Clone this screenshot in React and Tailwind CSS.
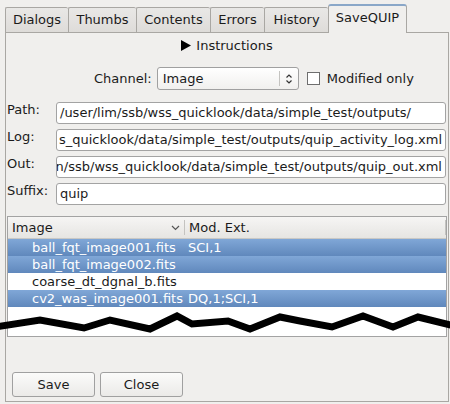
import React from "react";

const tabs = [
  { name: "Dialogs", w: "w-[63px]" },
  { name: "Thumbs", w: "w-[68px]" },
  { name: "Contents", w: "w-[74px]" },
  { name: "Errors", w: "w-[54px]" },
  { name: "History", w: "w-[64px]" },
];

const rows = [
  { file: "ball_fqt_image001.fits", ext: "SCI,1", sel: true },
  { file: "ball_fqt_image002.fits", ext: "", sel: true },
  { file: "coarse_dt_dgnal_b.fits", ext: "", sel: false },
  { file: "cv2_was_image001.fits", ext: "DQ,1;SCI,1", sel: true },
];

function Field({ label, value, right }) {
  return (
    <div className="flex items-start">
      <div className="w-[50px] pl-[1px] leading-[17px] -mt-[1px] text-[#1b1b1b]">{label}</div>
      <div
        className={
          "w-[390px] h-[22px] rounded-[3px] border border-[#a3a3a3] bg-white overflow-hidden flex items-center whitespace-nowrap " +
          (right ? "justify-end pr-[3px]" : "justify-start pl-[3px]")
        }
      >
        <span className="text-[#1b1b1b]">{value}</span>
      </div>
    </div>
  );
}

function Button({ children, w }) {
  return (
    <div
      className={
        "h-[25px] rounded-[3px] border border-[#a0a0a0] bg-gradient-to-b from-[#fbfbfa] to-[#ebeae8] flex items-center justify-center text-[#1b1b1b] " +
        w
      }
    >
      {children}
    </div>
  );
}

export default function App() {
  return (
    <div
      className="relative w-[450px] h-[404px] overflow-hidden bg-[#f0efed] text-[13px] text-[#1b1b1b]"
      style={{ fontFamily: '"DejaVu Sans", Verdana, sans-serif' }}
    >
      {/* tab bar */}
      <div className="flex items-end pl-[5px] pt-[4px] h-[32px]">
        {tabs.map((t) => (
          <div
            key={t.name}
            className={
              "h-[25px] border-t border-l border-[#a9a7a3] rounded-t-[2px] bg-gradient-to-b from-[#e9e8e6] to-[#dedcd9] flex items-center justify-center " +
              t.w
            }
          >
            {t.name}
          </div>
        ))}
        <div className="relative z-10 w-[79px] h-[29px] -mb-px border-t-2 border-l border-r border-t-[#8aa7c8] border-x-[#a9a7a3] rounded-t-[3px] bg-[#f0efed] flex items-center justify-center pb-[3px]">
          SaveQUIP
        </div>
      </div>

      {/* panel */}
      <div className="ml-[5px] mr-[1px] h-[370px] border border-[#a9a7a3] flex flex-col">
        <div className="flex items-center justify-center gap-[5px] mt-[4px] h-[17px]">
          <svg width="10" height="11" viewBox="0 0 10 11">
            <polygon points="0,0 10,5.5 0,11" fill="#000" />
          </svg>
          <span>Instructions</span>
        </div>

        <div className="flex items-center mt-[13px] h-[23px]">
          <span className="ml-[88px] mr-[5px]">Channel:</span>
          <div className="w-[142px] h-[23px] rounded-[3px] border border-[#a0a0a0] bg-gradient-to-b from-[#ffffff] to-[#f1f0ee] flex items-center">
            <span className="pl-[5px] flex-1">Image</span>
            <div className="w-px h-[15px] bg-[#c4c3c0]" />
            <svg className="mx-[5px]" width="8" height="12" viewBox="0 0 8 12">
              <polyline points="1.5,4.5 4,2 6.5,4.5" fill="none" stroke="#333" strokeWidth="1.2" />
              <polyline points="1.5,7.5 4,10 6.5,7.5" fill="none" stroke="#333" strokeWidth="1.2" />
            </svg>
          </div>
          <div className="ml-[8px] w-[13px] h-[13px] border border-[#6e6e6e] bg-white" />
          <span className="ml-[7px]">Modified only</span>
        </div>

        <div className="flex flex-col gap-[5px] mt-[12px]">
          <Field label="Path:" value="/user/lim/ssb/wss_quicklook/data/simple_test/outputs/" />
          <Field label="Log:" right value="s_quicklook/data/simple_test/outputs/quip_activity_log.xml" />
          <Field label="Out:" right value="n/ssb/wss_quicklook/data/simple_test/outputs/quip_out.xml" />
          <Field label="Suffix:" value="quip" />
        </div>

        {/* table */}
        <div className="ml-[1px] mr-[1px] mt-[11px] h-[121px] border border-[#a3a3a3] bg-white flex flex-col">
          <div className="h-[22px] flex items-stretch bg-gradient-to-b from-[#f6f5f4] to-[#e6e5e2] border-b border-[#c9c8c5]">
            <div className="w-[176px] flex items-center pl-[4px] pr-[4px]">
              <span className="flex-1">Image</span>
              <svg width="9" height="6" viewBox="0 0 9 6">
                <polyline points="1,1 4.5,4.5 8,1" fill="none" stroke="#555" strokeWidth="1.2" />
              </svg>
            </div>
            <div className="w-px my-[3px] bg-[#c4c3c0]" />
            <div className="flex-1 flex items-center pl-[4px]">Mod. Ext.</div>
            <div className="w-px my-[3px] bg-[#c4c3c0]" />
          </div>
          {rows.map((r) => (
            <div
              key={r.file}
              className={
                "h-[17px] flex items-center whitespace-nowrap " +
                (r.sel ? "bg-gradient-to-b from-[#80a7d7] to-[#6088bc] text-white" : "bg-white text-[#1b1b1b]")
              }
            >
              <span className="w-[156px] ml-[24px]">{r.file}</span>
              <span>{r.ext}</span>
            </div>
          ))}
        </div>

        <div className="flex gap-[5px] ml-[6px] mt-[35px]">
          <Button w="w-[83px]">Save</Button>
          <Button w="w-[83px]">Close</Button>
        </div>
      </div>

      {/* torn edge */}
      <svg className="absolute left-0 top-[305px]" width="450" height="35" viewBox="0 305 450 35">
        <polyline
          points="-5,327 40,320 84,328 110,320 150,329 177,316 192,324 228,321 250,329 280,317 300,321 332,327 363,316 393,327 418,317 455,326"
          fill="none"
          stroke="#000"
          strokeWidth="7"
          strokeLinejoin="miter"
        />
      </svg>
    </div>
  );
}
